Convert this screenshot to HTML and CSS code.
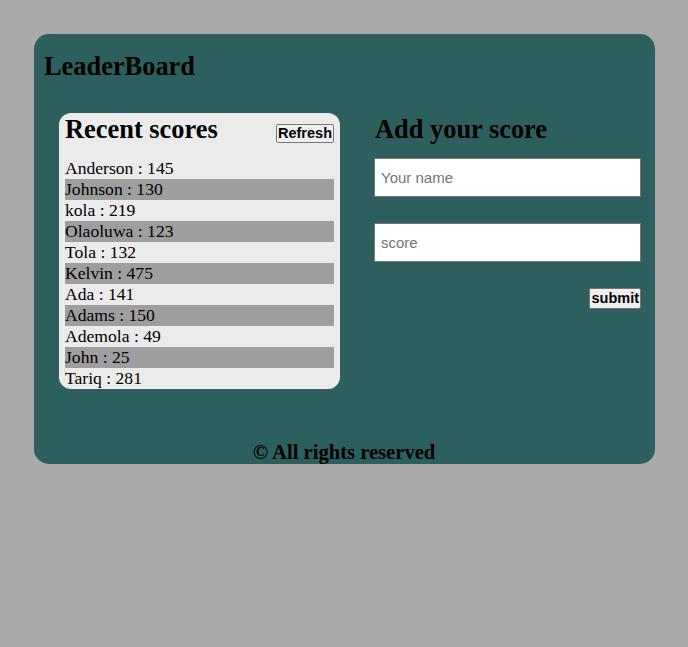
FILE: index.html
```html
<!DOCTYPE html>
<html>
<head>
<meta charset="utf-8">
<title>LeaderBoard</title>
<link rel="stylesheet" href="styles.css">
</head>
<body>
<div class="board">
  <h1 class="title">LeaderBoard</h1>
  <main class="main">
    <section class="card">
      <div class="card-head">
        <h2 class="heading">Recent scores</h2>
        <button class="btn" type="button">Refresh</button>
      </div>
      <ul class="scores">
        <li>Anderson : 145</li>
        <li>Johnson : 130</li>
        <li>kola : 219</li>
        <li>Olaoluwa : 123</li>
        <li>Tola : 132</li>
        <li>Kelvin : 475</li>
        <li>Ada : 141</li>
        <li>Adams : 150</li>
        <li>Ademola : 49</li>
        <li>John : 25</li>
        <li>Tariq : 281</li>
      </ul>
    </section>
    <section class="add">
      <h2 class="heading">Add your score</h2>
      <form class="form">
        <input class="field" type="text" placeholder="Your name">
        <input class="field" type="text" placeholder="score">
        <button class="btn submit" type="button">submit</button>
      </form>
    </section>
  </main>
  <footer class="footer">© All rights reserved</footer>
</div>
</body>
</html>
```
FILE: styles.css
```css
html, body {
  margin: 0;
  padding: 0;
}
body {
  background: #a9a9a9;
  font-family: "Liberation Serif", "Times New Roman", serif;
  color: #000;
  height: 647px;
}
.board {
  margin: 34px 33px 0 34px;
  width: 621px;
  height: 430px;
  box-sizing: border-box;
  background: #2d5f5e;
  border-radius: 15px;
  padding: 17px 14px 0 10px;
  display: flex;
  flex-direction: column;
}
.title {
  margin: 0;
  font-size: 26.4px;
  font-weight: bold;
  line-height: 30px;
}
.main {
  display: flex;
  margin-top: 32px;
  padding-left: 15px;
  gap: 34px;
}
.card {
  width: 281px;
  height: 276px;
  box-sizing: border-box;
  background: #ebebeb;
  border-radius: 12px;
  padding: 2px 6px 0 6px;
  display: flex;
  flex-direction: column;
}
.card-head {
  display: flex;
  justify-content: space-between;
  align-items: flex-end;
}
.heading {
  margin: 0;
  font-size: 26.4px;
  font-weight: bold;
  line-height: 28px;
}
.btn {
  font-family: "Liberation Sans", Arial, sans-serif;
  font-weight: bold;
  font-size: 14.5px;
  line-height: 17px;
  padding: 0 1px;
  background: #efefef;
  border: 1px solid #767676;
  border-radius: 2px;
  color: #000;
}
.scores {
  list-style: none;
  margin: 15px 0 0 0;
  padding: 0;
}
.scores li {
  font-size: 17.6px;
  line-height: 21px;
  height: 21px;
}
.scores li:nth-child(even) {
  background: #9e9e9e;
}
.add {
  flex: 1;
  padding-top: 2px;
}
.add .heading {
  padding-left: 1px;
}
.form {
  display: flex;
  flex-direction: column;
  margin-top: 15px;
}
.field {
  height: 39px;
  box-sizing: border-box;
  border: 1px solid #767676;
  border-radius: 0;
  padding: 0 6px;
  font-family: "Liberation Sans", Arial, sans-serif;
  font-size: 15px;
  margin-bottom: 26px;
  background: #fff;
}
.field::placeholder {
  color: #757575;
}
.submit {
  align-self: flex-end;
  height: 21px;
}
.footer {
  margin-top: auto;
  text-align: center;
  font-size: 20.6px;
  font-weight: bold;
  line-height: 23px;
  padding-left: 3px;
}
```
